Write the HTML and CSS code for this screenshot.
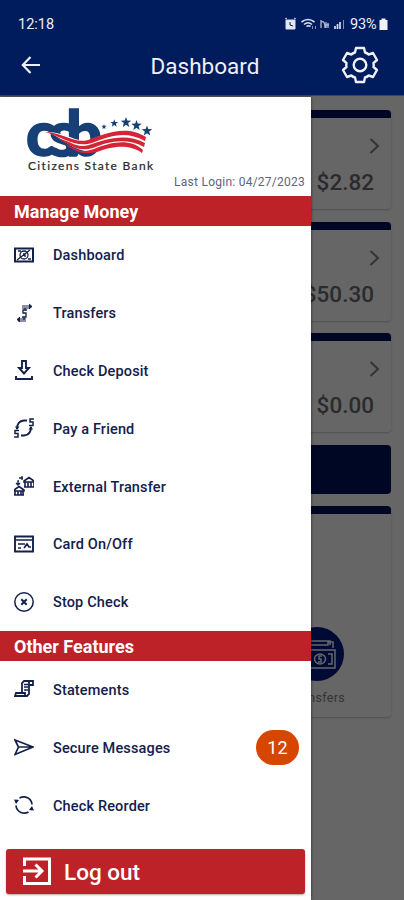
FILE: index.html
```html
<!DOCTYPE html>
<html lang="en">
<head>
<meta charset="utf-8">
<title>Dashboard</title>
<link rel="stylesheet" href="styles.css">
</head>
<body>
<div class="phone">
  <header class="header">
    <div class="status">
      <span class="time">12:18</span>
      <div class="indicators">
        <svg class="signals" width="64" height="14" viewBox="0 0 64 14" fill="none" stroke="#d9deef">
          <path d="M1 3h9v9H1zM0 2l2-1M11 2L9 1" fill="#e5e8f3"/><path d="M5 5v3l3 1" stroke="#001c5c"/>
          <path d="M16.500 5q6.500-5 13 0M19 7.500q4-3.500 8 0M21.500 9.500q2-1.500 4 0" stroke-width="1.600"/><path d="M27.500 12V9m3 0v3" stroke="#8290b7"/>
          <path d="M36 3v8M36 5q4-2 4 6M41 5v6M41 8h3M43 6v5" stroke-width="1.300" stroke="#b2bbd5"/>
          <path d="M50 9v3M52.500 7v5M55 5v7" stroke-width="1.700"/><path d="M58.500 3v9" stroke="#8290b7"/>
        </svg>
        <span class="percent">93%</span>
        <svg width="9" height="14" viewBox="0 0 9 14"><path d="M2.500 1.500h4V3h2v10H.5V3h2z" fill="#f1f3f8"/></svg>
      </div>
    </div>
    <div class="toolbar">
      <svg class="back" width="20" height="18" viewBox="0 0 20 18" fill="none" stroke="#eef0f7" stroke-width="2.200"><path d="M19 9H2M9.500 1L1.800 9l7.700 8"/></svg>
      <h1>Dashboard</h1>
      <svg class="gear" width="38" height="38" viewBox="-19 -19 38 38" fill="none" stroke="#eef0f7" stroke-width="2.400" stroke-linejoin="round"><path d="M-4-17H4L5-12.500Q7-12 8.700-10.500L13-12 17-5 13.500-2Q14 0 13.500 2L17 5 13 12 8.700 10.500Q7 12 5 12.500L4 17H-4L-5 12.500Q-7 12-8.700 10.500L-13 12-17 5-13.500 2Q-14 0-13.500-2L-17-5-13-12-8.700-10.500Q-7-12-5-12.500Z"/><circle r="6.300"/></svg>
    </div>
  </header>
  <main class="content">
    <section class="card account"><svg class="chevron" viewBox="0 0 10 16"><path d="M1 1l7.500 7L1 15"/></svg><strong>$2.82</strong></section>
    <section class="card account"><svg class="chevron" viewBox="0 0 10 16"><path d="M1 1l7.500 7L1 15"/></svg><strong>$50.30</strong></section>
    <section class="card account"><svg class="chevron" viewBox="0 0 10 16"><path d="M1 1l7.500 7L1 15"/></svg><strong>$0.00</strong></section>
    <div class="action"></div>
    <section class="card shortcuts">
      <div class="shortcut">
        <svg width="54" height="54" viewBox="0 0 54 54" fill="none"><circle cx="27" cy="27" r="27" fill="#000b35"/><g stroke="#66676c" stroke-width="1.500"><path d="M15 23v-5h23v-3h5v6M17 18v-4h23v4M14 23h31v18H14zM18 27h3M38 27h4v10h-4M18 37h3"/><ellipse cx="30" cy="32" rx="5.500" ry="5"/><path d="M32 29h-3v3h2v3h-3"/></g></svg>
        <span>Transfers</span>
      </div>
    </section>
  </main>

  <aside class="drawer">
    <div class="brand">
      <svg class="logo" width="134" height="66" viewBox="0 0 134 66">
        <text class="mark" x="-1 22 39" y="50">csb</text>
        <path d="M20 26C42 27 48 37 62 34C72 31 82 25 93 25Q107 25 118 32L116 47C108 38 96 36 84 39C74 42 62 47 54 44C42 41 36 32 20 26Z" fill="#fff"/>
        <g fill="#d32536"><path d="M18 26C38 27 47 38 61 34C77 28 99 18 119 31L118 35C99 24 82 30 65 37C48 42 36 31 18 26Z"/><path d="M29 32C43 34 49 43 62 39C77 34 98 26 118 37L117 41C99 31 80 36 66 42C49 47 42 37 29 32Z"/><path d="M36 37C48 42 53 48 67 43C84 36 103 32 116 44L115 47C101 37 83 41 70 46C53 50 48 44 36 37Z"/></g>
        <g fill="#164076"><path id="star" d="M99 11l1.300 3.500 4 .2-3.100 2.400 1 3.900-3.200-2.200-3.200 2.200 1-3.900-3.100-2.400 4-.2z"/><use href="#star" x="10.500" y="3"/><use href="#star" x="21" y="8.500"/><use href="#star" transform="translate(13 5) scale(.75)"/><use href="#star" transform="translate(27.500 12.500) scale(.5)"/></g>
        <text class="bankname" x="1" y="63.500" textLength="126">Citizens State Bank</text>
      </svg>
      <div class="login">Last Login: 04/27/2023</div>
    </div>
    <h2>Manage Money</h2>
    <nav>
      <a><svg viewBox="0 0 20 20"><path d="M1 3.500h18v13H1z" stroke-width="2"/><circle cx="10" cy="10" r="4"/><path d="M3 15L16 5M4 6h3M14 14h3M9 9h2v3"/></svg><span>Dashboard</span></a>
      <a><svg viewBox="0 0 20 20"><path d="M8 3h8M8 5h8M4 16h8M4 18h8" stroke-width="1"/><path d="M15 1l3 2.500L15 6M6 14l-3 2.500L6 19" fill="#14204c" stroke-width="1"/><path d="M13 7H9v3h3v4H8M11 5v2M10 14v3"/></svg><span>Transfers</span></a>
      <a><svg viewBox="0 0 20 20"><path d="M8 1h4v7h3l-5 5.500L5 8h3zM2 16v3h16v-3" stroke-width="1.900"/></svg><span>Check Deposit</span></a>
      <a><svg viewBox="0 0 20 20"><path d="M3 11Q3 3 10 2.500h3M17 9Q17 17 10 17.500H7" stroke-width="1.800"/><path d="M1 8.500h4.500L3 12zM19 11.500h-4.500L17 8z" fill="#14204c" stroke="none"/><path d="M20 1h-4v3h3v3.500h-4M5 12.500H1v3h3V19H0" stroke-width="1.500"/></svg><span>Pay a Friend</span></a>
      <a><svg viewBox="0 0 20 20"><path d="M10 5l5-3.500L20 5v1H10zM11 6v5M14 6v5M17 6v5M20 6v5M10 11h10M0 14l5-3.500L10 14v1H0zM1 15v4M4 15v4M7 15v4M9 15v4M0 19h10" stroke-width="1.600"/><path d="M4 8V5h1M5 2h4M8 0v4M2 7l2 2 2-2"/></svg><span>External Transfer</span></a>
      <a><svg viewBox="0 0 20 20"><path d="M1 2.500h18v15H1z" stroke-width="1.900"/><path d="M2 6h16M4 10h7M4 14h3M10 14l3-4 2 3h2" stroke-width="1.700"/></svg><span>Card On/Off</span></a>
      <a><svg viewBox="0 0 20 20"><circle cx="10" cy="10" r="9.200" stroke-width="1.500"/><path d="M7.300 7.300l5.400 5.400M12.700 7.300l-5.400 5.400" stroke-width="2"/></svg><span>Stop Check</span></a>
    </nav>
    <h2>Other Features</h2>
    <nav>
      <a><svg viewBox="0 0 20 20"><path d="M8 14V4l2-2h9v4h-4v9l-2 2H1l1-3h9v2M15 6V2.500" stroke-width="1.800"/><path d="M10 5.500h4M10 8h4M10 11h4" stroke-width="1.500"/></svg><span>Statements</span></a>
      <a><svg viewBox="0 0 20 20"><path d="M1 3l18 7L1 17.500 4.500 10zM5 10h13" stroke-width="1.700"/></svg><span>Secure Messages</span><b class="badge">12</b></a>
      <a><svg viewBox="0 0 20 20"><path d="M5.500 3A8.300 8.300 0 0 1 18 9.500M14.500 17A8.300 8.300 0 0 1 2 10.500M3.500 5L2 7M16.500 15l1.500-2" stroke-width="1.700"/><path d="M0 4.500l5 .5-3 4zM20 15.500l-5-.5 3-4z" fill="#14204c" stroke="none"/></svg><span>Check Reorder</span></a>
    </nav>
    <button class="logout"><svg width="28" height="28" viewBox="0 0 28 28" fill="none" stroke="#fff" stroke-width="3"><path d="M1.500 9V2h25v24.500h-25V19"/><path d="M0 14h18M12.500 7.500L19 14l-6.500 6.500"/></svg><span>Log out</span></button>
  </aside>
</div>
</body>
</html>
```
FILE: styles.css
```css
* { box-sizing: border-box; }
body { margin: 0; font-family: Roboto, sans-serif; }
.phone { position: relative; width: 404px; height: 900px; overflow: hidden; background: #666; }
.header { height: 96px; background: #001c5c; border-bottom: 1px solid #36418a; color: #eef0f7; }
.status { display: flex; justify-content: space-between; align-items: center; height: 36px; padding: 12px 16px 0 18px; font-size: 14.500px; }
.indicators { display: flex; align-items: center; }
.indicators svg { display: block; }
.percent { width: 29px; font-size: 14.500px; letter-spacing: -.2px; white-space: nowrap; }
.signals { margin-right: 1px; }
.toolbar { display: grid; grid-template-columns: 60px 1fr 60px; align-items: center; height: 58px; padding: 0 14px 0 21px; }
.toolbar h1 { margin: 0; font-size: 22.500px; line-height: 28px; font-weight: 400; text-align: center; padding: 2px 1px 0 0; }
.gear { justify-self: end; margin-right: 11px; }
.content { display: flex; flex-direction: column; gap: 12.500px; padding: 14px 13px 0; }
.card { border-top: 8px solid #000724; border-radius: 4px; background: #666; box-shadow: 0 1px 2px rgba(0,0,0,.22); }
.account { height: 99px; display: flex; flex-direction: column; align-items: flex-end; padding: 20px 17px 0 0; color: #2b2b2d; }
.account strong { font-size: 22.500px; line-height: 28px; margin-top: 14px; font-weight: 500; }
.chevron { width: 11px; height: 16px; margin-right: -6px; fill: none; stroke: #343434; stroke-width: 2; }
.action { height: 49px; border-radius: 4px; background: #000724; }
.shortcuts { height: 211px; display: flex; justify-content: flex-end; padding: 113px 46px 0 0; color: #343434; font-size: 12.500px; }
.shortcut { display: flex; flex-direction: column; align-items: center; gap: 9px; letter-spacing: .3px; }
.shortcut svg { flex: none; }
.drawer { position: absolute; z-index: 2; left: 0; top: 97px; bottom: 0; width: 311px; background: #fff; box-shadow: 0 0 3px rgba(0,0,0,.6); }
.brand { height: 99px; padding: 9px 6px 0 27px; display: flex; flex-direction: column; }
.logo { display: block; overflow: visible; flex: none; }
.mark { font: 900 63px Lato, sans-serif; fill: #164076; stroke: #164076; stroke-width: 1.500; }
.bankname { font: 12px Lato, sans-serif; fill: #27272c; stroke: #27272c; stroke-width: .2; letter-spacing: 1px; }
.login { align-self: flex-end; margin-top: 2px; font-size: 12px; line-height: 16px; color: #60647b; letter-spacing: .25px; white-space: nowrap; }
.drawer h2 { height: 30px; margin: 0; padding: 1px 14px 0; background: #bd2229; color: #fff; font-size: 18px; font-weight: 700; line-height: 30px; }
nav a { height: 57.800px; display: flex; align-items: center; padding: 0 12px 0 14px; font-size: 14.500px; font-weight: 500; letter-spacing: .15px; color: #14204c; }
nav span { padding-top: 2px; }
nav svg { width: 20px; height: 20px; flex: none; margin-right: 19px; fill: none; stroke: #14204c; stroke-width: 1.300; }
.badge { display: flex; align-items: center; justify-content: center; width: 43px; height: 35px; border-radius: 18px; margin-left: auto; background: #d64600; color: #fff; font-size: 18px; font-weight: 400; }
.logout { display: flex; align-items: center; width: 299px; height: 45px; margin: 15px 6px 0; padding: 0 17px; gap: 13px; border: 0; border-radius: 3px; background: #bd2229; box-shadow: 0 1px 2px rgba(0,0,0,.35); color: #fff; font: 500 22.500px Roboto, sans-serif; text-align: left; }
.logout span { padding-top: 2px; }
```
